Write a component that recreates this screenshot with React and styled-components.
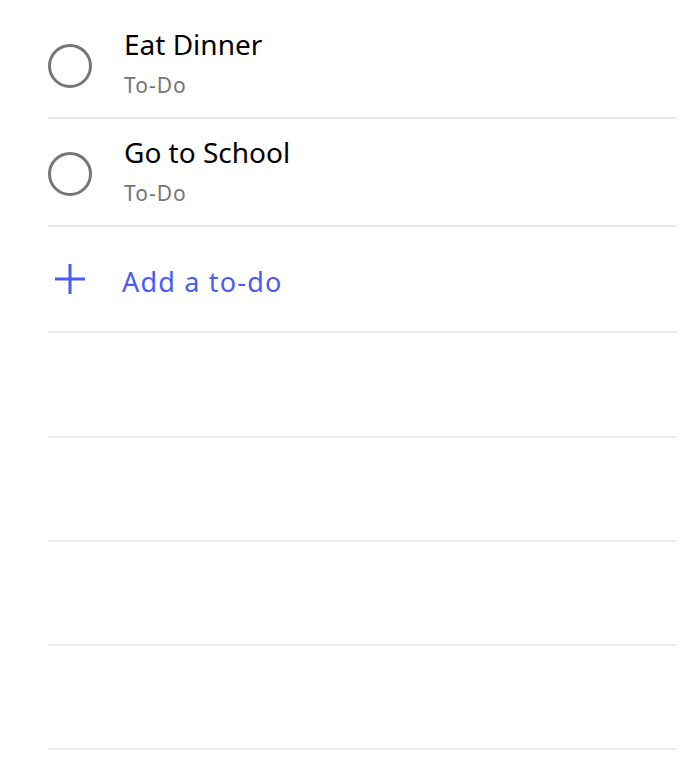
import React from "react";
import styled, { createGlobalStyle } from "styled-components";

const GlobalStyle = createGlobalStyle`
  html, body {
    margin: 0;
    padding: 0;
    background: #fff;
    font-family: "Noto Sans", "Open Sans", sans-serif;
  }
`;

const todos = [
  { id: 1, title: "Eat Dinner", list: "To-Do" },
  { id: 2, title: "Go to School", list: "To-Do" },
];

function App() {
  return (
    <>
      <GlobalStyle />
      <ListWrapper>
        {todos.map((todo) => (
          <TodoRow key={todo.id}>
            <Check />
            <TodoText>
              <Title>{todo.title}</Title>
              <SubTitle>{todo.list}</SubTitle>
            </TodoText>
          </TodoRow>
        ))}
        <AddRow>
          <PlusIcon width="32" height="32" viewBox="0 0 32 32">
            <path d="M16 1v30M1 16h30" stroke="currentColor" strokeWidth="3" fill="none" />
          </PlusIcon>
          <AddLabel>Add a to-do</AddLabel>
        </AddRow>
        {[103, 102, 102, 102].map((h, i) => (
          <EmptyRow key={i} $height={h} />
        ))}
      </ListWrapper>
    </>
  );
}

export default App;

const ListWrapper = styled.div`
  padding: 11px 22px 0 48px;
  display: flex;
  flex-direction: column;
`;

const TodoRow = styled.div`
  height: 106px;
  display: flex;
  align-items: flex-start;
  border-bottom: 2px solid #ebebeb;
`;

const Check = styled.div`
  width: 38px;
  height: 38px;
  border: 3px solid #767676;
  border-radius: 50%;
  margin-top: 33px;
  flex-shrink: 0;
`;

const TodoText = styled.div`
  margin-left: 32px;
  padding-top: 15px;
  display: flex;
  flex-direction: column;
`;

const Title = styled.div`
  font-size: 28px;
  color: #000;
  line-height: 36px;
`;

const SubTitle = styled.div`
  font-size: 21px;
  color: #767676;
  line-height: 30px;
  letter-spacing: 1px;
  margin-top: 8px;
`;

const AddRow = styled.div`
  height: 104px;
  display: flex;
  align-items: center;
  border-bottom: 2px solid #ebebeb;
  color: #4a5cf7;
`;

const PlusIcon = styled.svg`
  margin-left: 6px;
  flex-shrink: 0;
`;

const AddLabel = styled.span`
  margin-left: 36px;
  font-size: 27px;
  letter-spacing: 1.2px;
  margin-top: 4px;
`;

const EmptyRow = styled.div`
  height: ${(props) => props.$height}px;
  border-bottom: 2px solid #ebebeb;
`;
